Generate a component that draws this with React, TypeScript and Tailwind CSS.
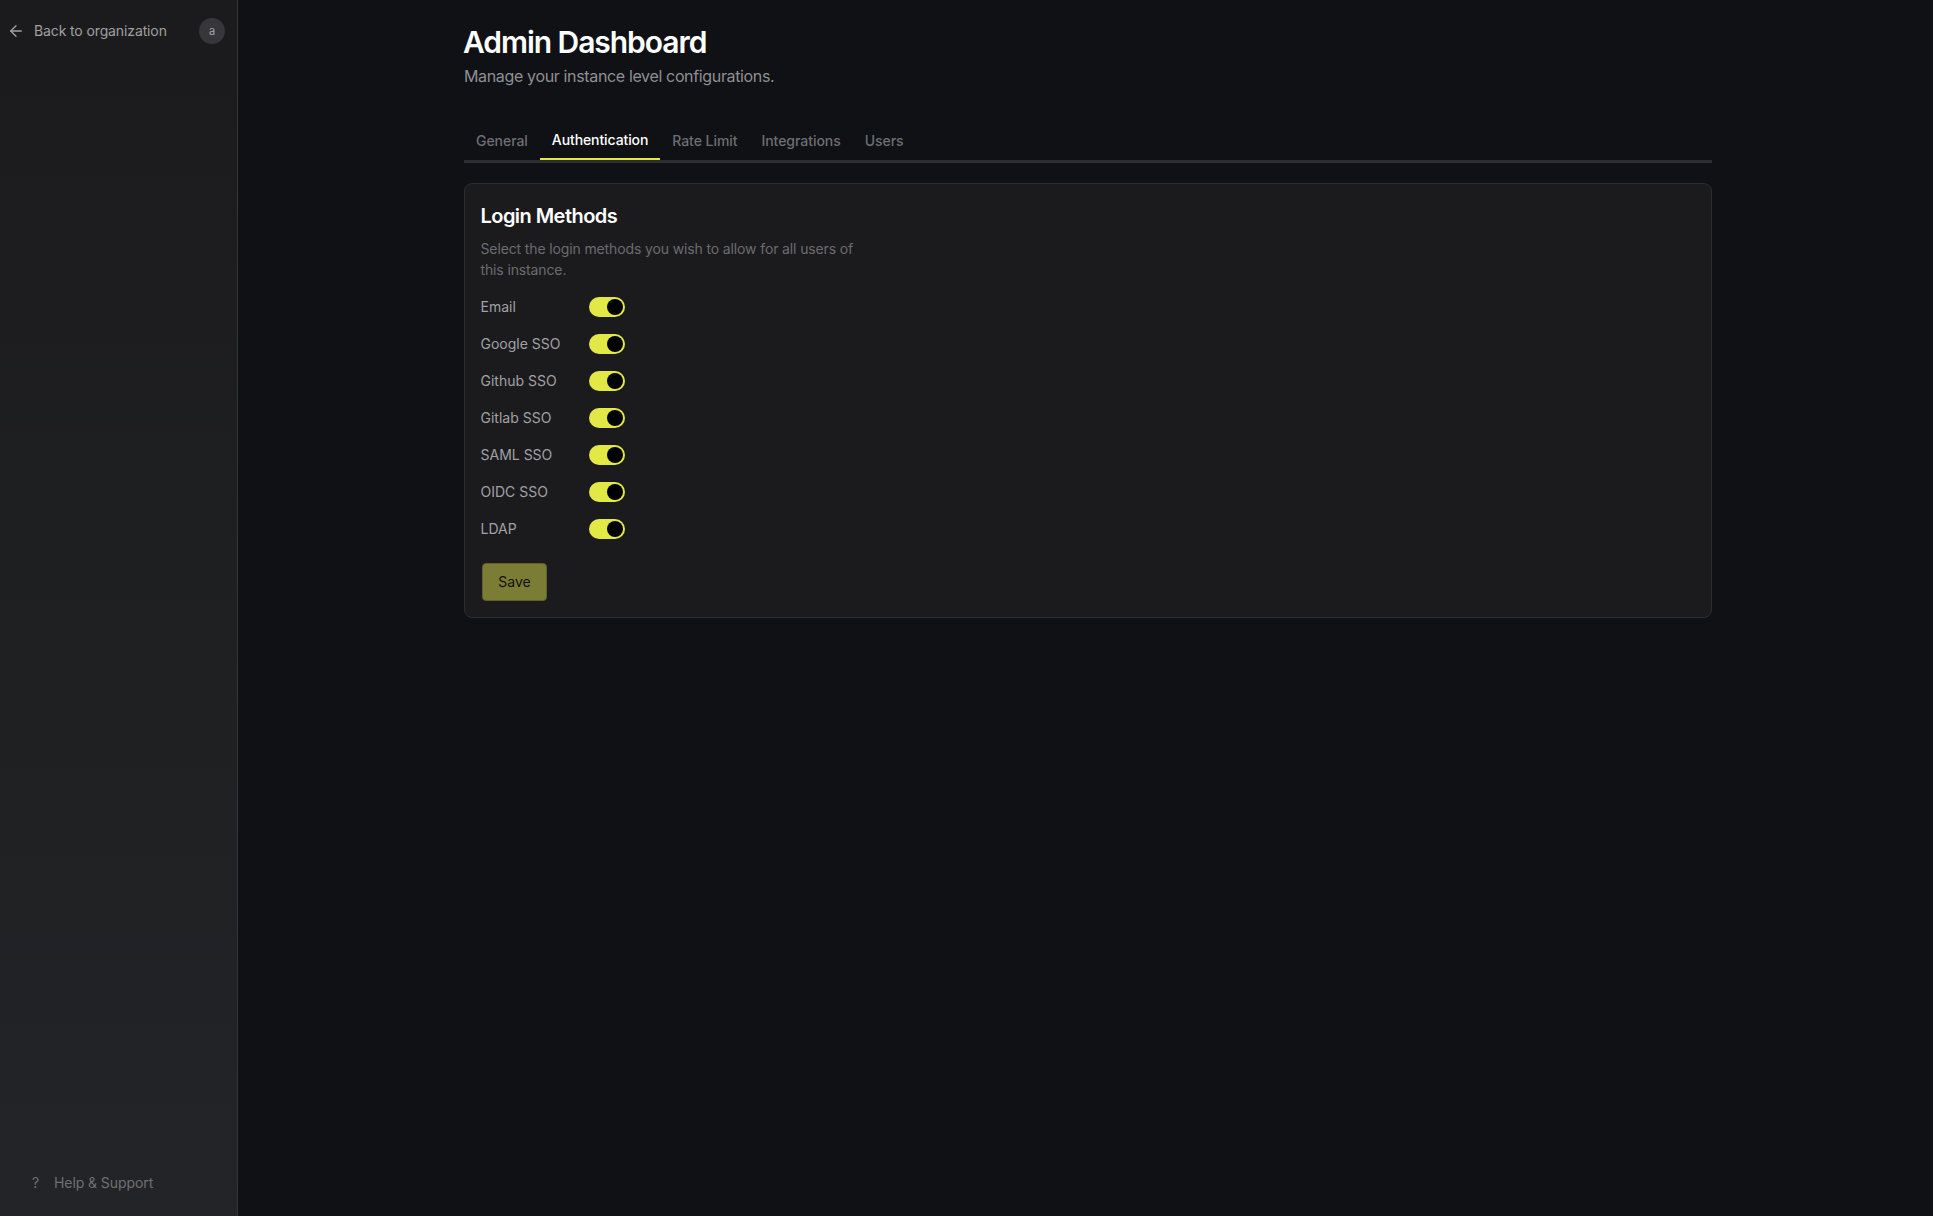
import { useState } from "react";
import { ArrowLeft } from "lucide-react";

const tabs = ["General", "Authentication", "Rate Limit", "Integrations", "Users"];
const methods = ["Email", "Google SSO", "Github SSO", "Gitlab SSO", "SAML SSO", "OIDC SSO", "LDAP"];

function Toggle() {
  return (
    <div className="flex h-5 w-9 items-center justify-end rounded-full bg-[#e2e846] pr-0.5">
      <div className="h-4 w-4 rounded-full bg-black" />
    </div>
  );
}

export default function App() {
  const [activeTab] = useState("Authentication");

  return (
    <div className="flex h-screen overflow-hidden bg-[#0f1114] font-['Inter',sans-serif]">
      <aside className="flex w-[238px] shrink-0 flex-col justify-between border-r border-[#333538] bg-gradient-to-b from-[#1b1b1d] to-[#232427]">
        <div className="flex h-[62px] items-center pl-[7px] pr-3">
          <ArrowLeft className="h-[18px] w-[18px] text-[#a3a3a3]" strokeWidth={1.75} />
          <span className="ml-[9px] text-sm tracking-[-0.12px] text-[#a0a0a0]">Back to organization</span>
          <div className="ml-auto flex h-[26px] w-[26px] items-center justify-center rounded-full bg-[#36363b] text-[11px] text-[#a3a3a3]">
            a
          </div>
        </div>
        <div className="flex h-16 items-center pb-[2px] pl-8">
          <span className="w-[22px] text-sm text-[#6f7072]">?</span>
          <span className="text-sm tracking-[-0.08px] text-[#6f7072]">Help &amp; Support</span>
        </div>
      </aside>

      <main className="flex-1 pl-[226px] pr-[221px] pt-6">
        <h1 className="-ml-px text-3xl leading-9 font-semibold tracking-[-1.05px] text-white">Admin Dashboard</h1>
        <p className="mt-1 text-base tracking-[-0.35px] text-[#8f8f93]">Manage your instance level configurations.</p>

        <div className="mt-8 flex h-[43px] border-b-[3px] border-[#2c2e33]">
          {tabs.map((tab) => (
            <div
              key={tab}
              className={
                tab === activeTab
                  ? "flex h-10 items-center border-b-2 border-[#e2e846] px-3 pt-[2px] text-sm font-medium tracking-[-0.1px] text-white"
                  : "flex h-10 items-center px-3 pt-[2px] text-sm font-medium tracking-[-0.05px] text-[#6e6e72]"
              }
            >
              {tab}
            </div>
          ))}
        </div>

        <section className="mt-5 rounded-lg border border-[#2c2d31] bg-[#1b1b1d] pb-4 pl-[15.5px] pr-4 pt-[18px]">
          <h2 className="text-xl leading-7 font-semibold tracking-[-0.55px] text-white">Login Methods</h2>
          <p className="mt-2 w-[380px] text-sm leading-[21px] tracking-[-0.13px] text-[#6b6b70]">
            Select the login methods you wish to allow for all users of this instance.
          </p>
          <div className="mt-[17px] flex flex-col gap-[17px]">
            {methods.map((name) => (
              <div key={name} className="flex h-5 items-center">
                <span className="w-[108.5px] text-sm text-[#a1a1a5]">{name}</span>
                <Toggle />
              </div>
            ))}
          </div>
          <button className="ml-[1.5px] mt-6 h-[38px] w-[65px] rounded-[4px] border border-[#5e6030] bg-[#7a7d33] text-sm font-normal text-[#111111]">
            Save
          </button>
        </section>
      </main>
    </div>
  );
}
